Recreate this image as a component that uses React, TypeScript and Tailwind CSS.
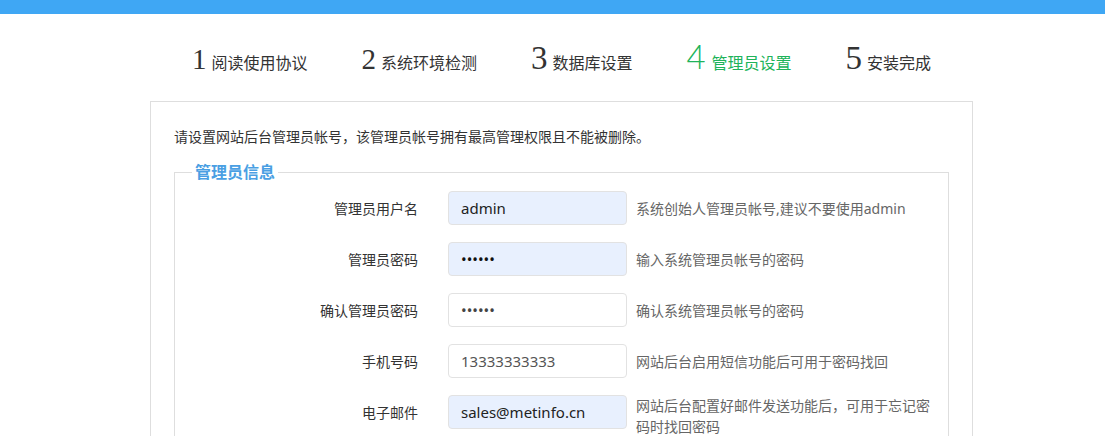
import React from "react";

const font = { fontFamily: '"Noto Sans", "Noto Sans CJK SC", sans-serif' };

const steps = [
  { n: "1", t: "阅读使用协议", active: false, big: false },
  { n: "2", t: "系统环境检测", active: false, big: false },
  { n: "3", t: "数据库设置", active: false, big: true },
  { n: "4", t: "管理员设置", active: true, big: true },
  { n: "5", t: "安装完成", active: false, big: true },
];

type Row = {
  label: string;
  value: string;
  type: string;
  filled: boolean;
  color: string;
  hint: string;
};

const rows: Row[] = [
  { label: "管理员用户名", value: "admin", type: "text", filled: true, color: "text-[#222]", hint: "系统创始人管理员帐号,建议不要使用admin" },
  { label: "管理员密码", value: "123456", type: "password", filled: true, color: "text-[#111]", hint: "输入系统管理员帐号的密码" },
  { label: "确认管理员密码", value: "123456", type: "password", filled: false, color: "text-[#444]", hint: "确认系统管理员帐号的密码" },
  { label: "手机号码", value: "13333333333", type: "text", filled: false, color: "text-[#555]", hint: "网站后台启用短信功能后可用于密码找回" },
  { label: "电子邮件", value: "sales@metinfo.cn", type: "text", filled: true, color: "text-[#222]", hint: "网站后台配置好邮件发送功能后，可用于忘记密码时找回密码" },
];

export default function App() {
  return (
    <div className="w-[1105px] h-[436px] overflow-hidden bg-white" style={font}>
      <div className="h-[14px] bg-[#3fa7f4]" />
      <div className="ml-[150px] w-[823px]">
        <div className="mt-[26px] flex items-baseline justify-center gap-[54px] leading-none">
          {steps.map((s) => (
            <div key={s.n} className={`flex items-baseline ${s.active ? "text-[#20b35a]" : "text-[#333]"}`}>
              {s.active ? (
                <span className="text-[33px] font-light mr-[6px]" style={{ fontFamily: '"Lato", "Liberation Sans", sans-serif' }}>
                  {s.n}
                </span>
              ) : (
                <span
                  className={`${s.big ? "text-[33px]" : "text-[29px]"} mr-[5px]`}
                  style={{ fontFamily: '"Liberation Serif", "DejaVu Serif", serif' }}
                >
                  {s.n}
                </span>
              )}
              <span className="text-[16px]">{s.t}</span>
            </div>
          ))}
        </div>

        <div className="mt-[26px] border border-[#dedede] px-[23px] pt-[25px] pb-[40px]">
          <p className="text-[14px] leading-[20px] text-[#333]">
            请设置网站后台管理员帐号，该管理员帐号拥有最高管理权限且不能被删除。
          </p>
          <fieldset className="mt-[14px] border border-[#dedede] pt-[8px] pb-[20px]">
            <legend className="ml-[17px] px-[3px] text-[16px] leading-[22px] font-bold text-[#4a9fe3]">
              管理员信息
            </legend>
            <div className="flex flex-col gap-[17px]">
              {rows.map((r) => (
                <div key={r.label} className="flex items-start">
                  <div className="w-[243px] h-[34px] flex items-center justify-end text-[14px] text-[#333]">
                    {r.label}
                  </div>
                  <input
                    readOnly
                    type={r.type}
                    defaultValue={r.value}
                    className={`ml-[30px] w-[179px] h-[34px] rounded-[4px] border border-[#e2e2e2] px-[12px] text-[15px] outline-none ${r.color} ${
                      r.filled ? "bg-[#e8f0fe]" : "bg-white"
                    }`}
                    style={font}
                  />
                  <div className="ml-[9px] w-[298px] min-h-[34px] flex items-center text-[14px] leading-[21px] text-[#666]">
                    {r.hint}
                  </div>
                </div>
              ))}
            </div>
          </fieldset>
        </div>
      </div>
    </div>
  );
}
